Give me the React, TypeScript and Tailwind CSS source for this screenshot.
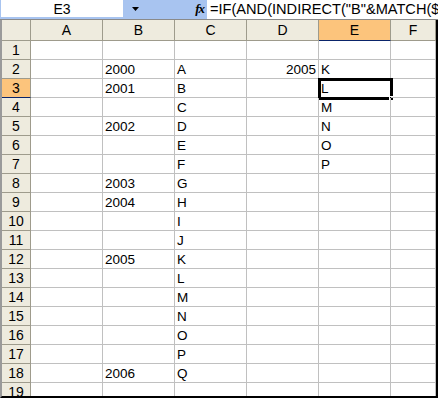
const cols = ["A", "B", "C", "D", "E", "F"];

const colB: Record<number, string> = { 2: "2000", 3: "2001", 5: "2002", 8: "2003", 9: "2004", 12: "2005", 18: "2006" };
const colC = "ABCDEFGHIJKLMNOPQ".split("");
const colE = ["K", "L", "M", "N", "O", "P"];

function cellText(row: number, col: string) {
  if (col === "B") return colB[row] ?? "";
  if (col === "C") return row >= 2 && row <= 18 ? colC[row - 2] : "";
  if (col === "D") return row === 2 ? "2005" : "";
  if (col === "E") return row >= 2 && row <= 7 ? colE[row - 2] : "";
  return "";
}

export default function App() {
  const rows = Array.from({ length: 19 }, (_, i) => i + 1);

  return (
    <div className="w-[438px] h-[398px] overflow-hidden bg-white text-black text-[13.5px] font-['Liberation_Sans',Arial,sans-serif]">
      {/* name box + formula bar */}
      <div className="flex h-[20px] bg-[#A8C4F0] border-b border-[#8A8A8A]">
        <div className="shrink-0 ml-px w-[122px] h-[17px] bg-white flex items-center justify-center leading-none text-[14px]">
          E3
        </div>
        <div className="shrink-0 w-[84px] h-[17px] flex items-center justify-between pl-[9px] pr-[3px]">
          <svg width="7" height="4" viewBox="0 0 7 4">
            <path d="M0 0h7L3.5 4z" fill="#000" />
          </svg>
          <span className="font-['Liberation_Serif',serif] italic font-bold text-[13px] leading-none tracking-[-1px]">fx</span>
        </div>
        <div className="flex-1 min-w-0 h-[19px] bg-white overflow-hidden whitespace-nowrap pl-[3px] leading-[18px] text-[14.6px]">
          =IF(AND(INDIRECT("B"&amp;MATCH($D$2,$B:$B,0)+ROW()-2)="",ROW()&gt;2),"",INDIRECT("C"&amp;ROW()))
        </div>
      </div>

      {/* sheet */}
      <div className="h-[378px] overflow-hidden border-l-2 border-l-[#9A9A9A] border-r-2 border-r-black border-b-2 border-b-black">
        <div className="grid grid-cols-[29px_repeat(5,72px)_45px]">
          <div className="h-[21px] bg-[#EEEBDE] border-r border-b border-[#9E9B8C]" />
          {cols.map((c) => (
            <div
              key={c}
              className={`h-[21px] flex items-center justify-center border-r border-b text-[14px] ${
                c === "E" ? "bg-[#FCC47C] border-r-[#9E9B8C] border-b-[#0A246A]" : "bg-[#EEEBDE] border-[#9E9B8C]"
              }`}
            >
              {c}
            </div>
          ))}

          {rows.map((r) => (
            <div key={r} className="contents">
              <div
                className={`h-[19px] flex items-center justify-center border-r border-b text-[14px] ${
                  r === 3 ? "bg-[#FCC47C] border-r-[#9E9B8C] border-b-[#0A246A]" : "bg-[#EEEBDE] border-[#9E9B8C]"
                }`}
              >
                {r}
              </div>
              {cols.map((c) => (
                <div
                  key={c}
                  className={`relative h-[19px] border-r border-b border-[#C0C0C0] px-[2px] leading-[20px] whitespace-nowrap ${
                    c === "D" ? "text-right" : "text-left"
                  }`}
                >
                  {cellText(r, c)}
                  {r === 3 && c === "E" && (
                    <div className="absolute -left-[1px] -top-[1px] w-[75px] h-[22px] border-[3px] border-black">
                      <div className="absolute -right-[4px] -bottom-[4px] w-[5px] h-[5px] bg-black border border-white" />
                    </div>
                  )}
                </div>
              ))}
            </div>
          ))}
        </div>
      </div>
    </div>
  );
}
